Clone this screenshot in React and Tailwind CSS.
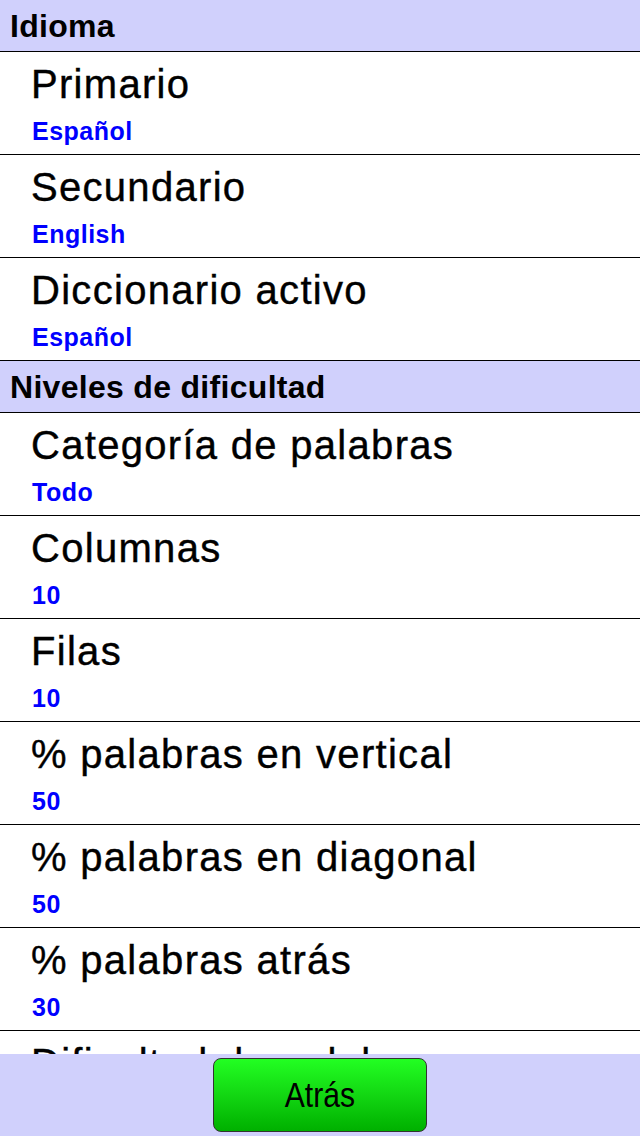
import React from 'react';

const sections = [
    {
        title: 'Idioma',
        items: [
            { label: 'Primario', value: 'Español' },
            { label: 'Secundario', value: 'English' },
            { label: 'Diccionario activo', value: 'Español' },
        ],
    },
    {
        title: 'Niveles de dificultad',
        items: [
            { label: 'Categoría de palabras', value: 'Todo' },
            { label: 'Columnas', value: '10' },
            { label: 'Filas', value: '10' },
            { label: '% palabras en vertical', value: '50' },
            { label: '% palabras en diagonal', value: '50' },
            { label: '% palabras atrás', value: '30' },
            { label: 'Dificultad de palabras', value: 'Normal' },
        ],
    },
];

const SectionHeader = ({ title }) => (
    <div className="bg-[#d0d0fc] border-b border-black h-[52px] pt-[10px] pl-[10px]">
        <h2 className="text-[32px] leading-[32px] font-bold tracking-[0.3px] text-black">{title}</h2>
    </div>
);

const Row = ({ label, value }) => (
    <div className="bg-white border-b border-black h-[103px] pl-[31px] pt-[12px]">
        <p className="text-[40px] leading-[40px] tracking-[1.3px] text-black [-webkit-text-stroke:0.4px_black]">{label}</p>
        <p className="mt-[15px] text-[25px] leading-[25px] font-bold tracking-[0.5px] text-[#0000ff] pl-[1px]">{value}</p>
    </div>
);

const App = () => {
    return (
        <div className="w-[640px] h-[1136px] flex flex-col bg-white font-['Liberation_Sans',Arial,sans-serif]">
            <div className="flex-1 overflow-hidden">
                {sections.map((s) => (
                    <div key={s.title}>
                        <SectionHeader title={s.title} />
                        {s.items.map((it) => (
                            <Row key={it.label} label={it.label} value={it.value} />
                        ))}
                    </div>
                ))}
            </div>
            <div className="h-[82px] bg-[#d0d0fc] flex justify-center pt-[4px]">
                <button
                    type="button"
                    className="w-[214px] h-[74px] rounded-[8px] border border-[#333] bg-gradient-to-b from-[#22ff22] to-[#00b000] text-black text-[35px] leading-[35px] flex items-center justify-center"
                >
                    <span className="inline-block scale-x-[0.86] -translate-y-[1px]">Atrás</span>
                </button>
            </div>
        </div>
    );
};

export default App;
